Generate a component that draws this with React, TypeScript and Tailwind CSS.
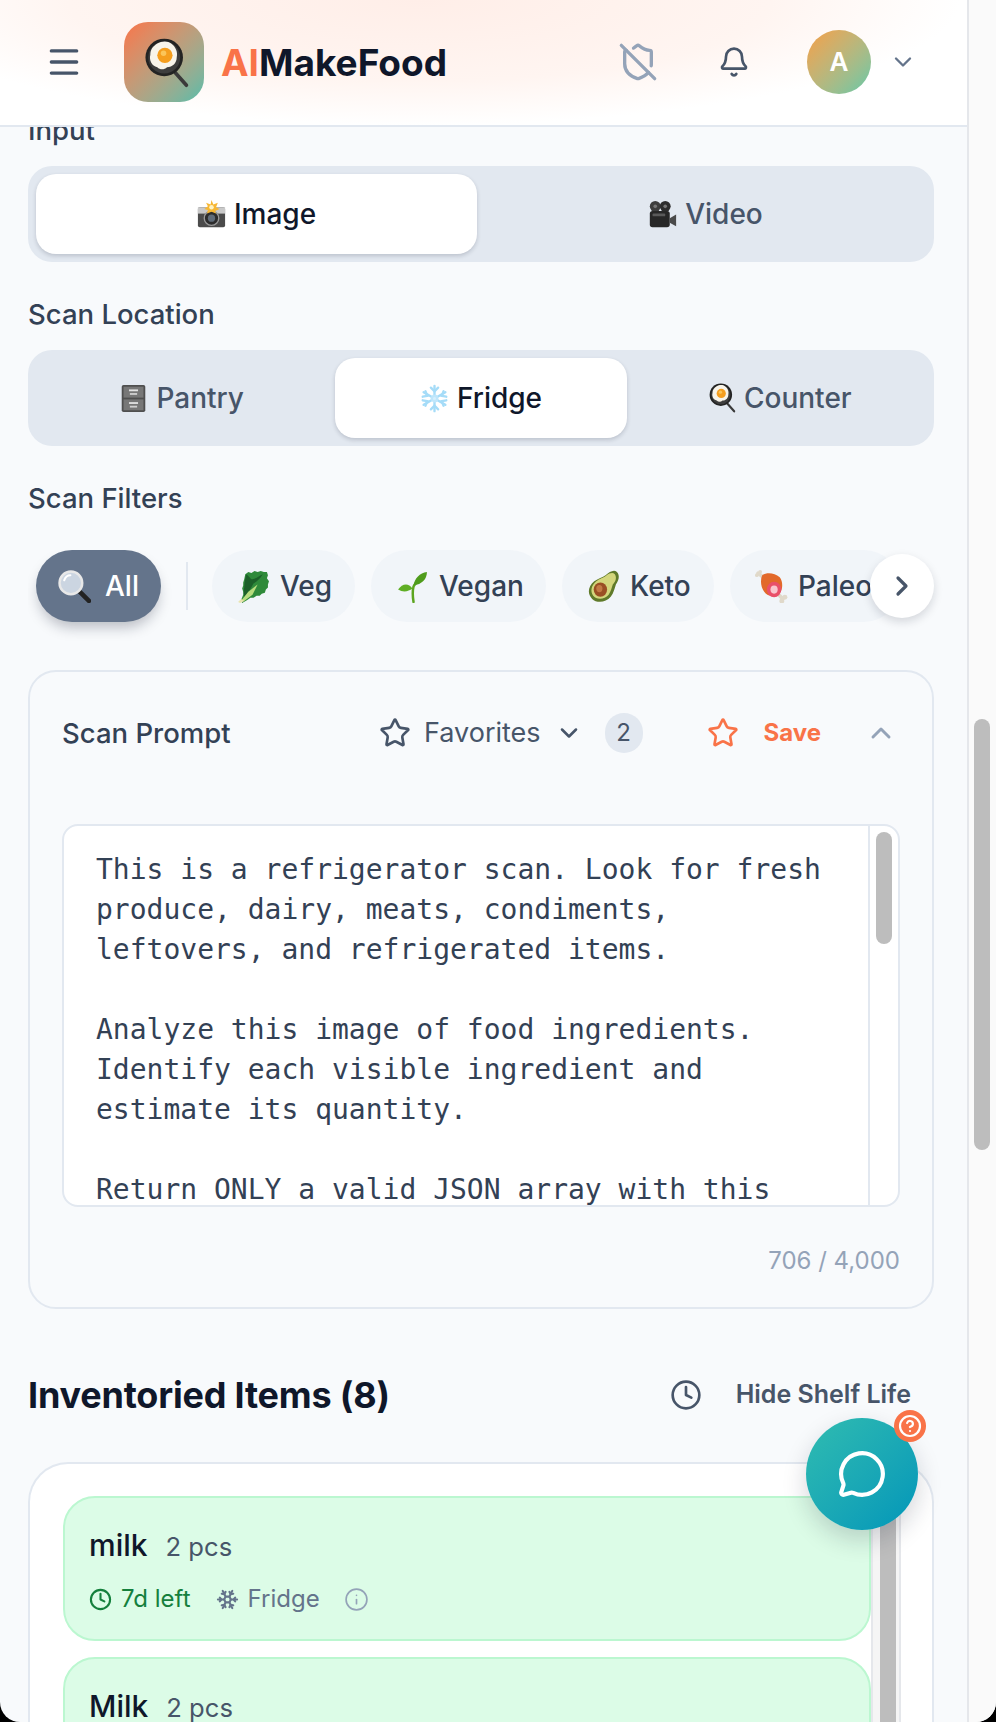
import React from "react";
import {
  Bell,
  ChevronDown,
  ChevronRight,
  ChevronUp,
  CircleHelp,
  Clock,
  Info,
  Menu,
  MessageCircle,
  ShieldOff,
  Snowflake,
  Star,
} from "lucide-react";

const PanEmoji = ({ className }: { className: string }) => (
  <svg viewBox="0 0 32 36" className={className}>
    <path d="M22 25l8 9" stroke="#3a3a3a" strokeWidth="2.6" strokeLinecap="round" />
    <circle cx="14" cy="14" r="13.5" fill="#232323" />
    <circle cx="14" cy="14" r="11.5" fill="#3d3d3d" />
    <path d="M9 4c3-2 8-2 10 0 3 2 5 6 4 10 0 4-3 7-7 7-2 2-5 2-7 0-4-1-6-5-5-9 0-4 2-6 5-8z" fill="#f8f4ea" />
    <circle cx="14.5" cy="12.5" r="5.5" fill="#f59e1e" />
    <circle cx="13.5" cy="11" r="2" fill="#fbc55a" />
  </svg>
);

const CameraEmoji = ({ className }: { className: string }) => (
  <svg viewBox="0 0 32 32" className={className}>
    <rect x="1" y="8" width="30" height="22" rx="2" fill="#4b4b4b" />
    <rect x="1" y="8" width="30" height="7" fill="#c9c9c9" />
    <circle cx="16" cy="20" r="8" fill="#2c2c2c" stroke="#9a9a9a" strokeWidth="1.5" />
    <circle cx="16" cy="20" r="4" fill="#5f6b78" />
    <path d="M16 0l2 5 5-2-2 5 4 2-5 2 1 3-5-2-5 2 1-4-4-1 4-3-2-4 5 2z" fill="#f7b733" />
    <circle cx="16" cy="8" r="2.5" fill="#fff3c2" />
  </svg>
);

const VideoEmoji = ({ className }: { className: string }) => (
  <svg viewBox="0 0 32 32" className={className}>
    <circle cx="8" cy="7" r="6" fill="#3d3d3d" />
    <circle cx="19" cy="7" r="6" fill="#2d2d2d" />
    <circle cx="8" cy="7" r="2" fill="#777" />
    <circle cx="19" cy="7" r="2" fill="#777" />
    <rect x="2" y="12" width="22" height="18" rx="3" fill="#272727" />
    <path d="M24 20l7-4v13l-7-4z" fill="#4a4a4a" />
    <rect x="5" y="15" width="14" height="3" rx="1" fill="#5a5a5a" />
  </svg>
);

const CabinetEmoji = ({ className }: { className: string }) => (
  <svg viewBox="0 0 32 32" className={className}>
    <rect x="3" y="1" width="26" height="30" rx="2" fill="#4f4f4f" />
    <rect x="5" y="3" width="22" height="12" fill="#777" />
    <rect x="5" y="17" width="22" height="12" fill="#777" />
    <rect x="11" y="6" width="10" height="2" fill="#e2e2e2" />
    <rect x="11" y="20" width="10" height="2" fill="#e2e2e2" />
    <rect x="12" y="10" width="8" height="2" fill="#d0d0d0" />
    <rect x="12" y="24" width="8" height="2" fill="#d0d0d0" />
  </svg>
);

const SnowEmoji = ({ className }: { className: string }) => (
  <svg viewBox="0 0 32 32" className={className} stroke="#a5dcf8" strokeWidth="2.6" strokeLinecap="round" fill="none">
    <path d="M16 2v28M4 9l24 14M28 9L4 23" />
    <path d="M12 4l4 4 4-4M12 28l4-4 4 4M3 14l5-1-2-5M29 18l-5 1 2 5M29 14l-5-1 2-5M3 18l5 1-2 5" />
    <circle cx="16" cy="16" r="3" fill="#d4effd" stroke="#bfe6fb" />
  </svg>
);

const LensEmoji = ({ className }: { className: string }) => (
  <svg viewBox="0 0 32 32" className={className}>
    <path d="M20 20l10 10" stroke="#222" strokeWidth="4.5" strokeLinecap="round" />
    <circle cx="12.5" cy="12.5" r="11" fill="#cbd5e1" stroke="#e8e8e8" strokeWidth="2.4" />
    <path d="M6 10c1-3 3-5 6-5" stroke="#fff" strokeWidth="2" fill="none" strokeLinecap="round" />
  </svg>
);

const LettuceEmoji = ({ className }: { className: string }) => (
  <svg viewBox="0 0 32 32" className={className}>
    <path d="M8 4l3-2 3 1 3-2 3 1 3-1 3 1 3 0 1 3-1 3 2 3-1 3 0 3-2 2-1 3-3 1-2 2-3 0-3 2-3 0-3 2-5 3-1-3 2-5 0-3-1-3 1-3 0-3 1-3z" fill="#2f8a3a" />
    <path d="M9 4c3 2 4 5 6 5 4-1 6-3 10-5-3 5-6 7-9 9l-4 7-5 7c0-3-1-7 0-10 0-4 1-9 2-13z" fill="#1c6029" />
    <path d="M3 31l8-10 9-7-5 10-8 6z" fill="#b7dc7d" />
    <path d="M1 31l3-3 3 2-4 2z" fill="#e9e4b0" />
  </svg>
);

const SproutEmoji = ({ className }: { className: string }) => (
  <svg viewBox="0 0 32 32" className={className}>
    <path d="M17 31c-1-6-1-11 0-15 1-2 2-3 3-4" stroke="#5ca51f" strokeWidth="2.4" fill="none" strokeLinecap="round" />
    <path d="M17 15c1-7 6-12 13-13 0 7-5 12-13 13z" fill="#4f9c1c" />
    <path d="M16 18C12 12 6 13 2 19c5 3 10 2 14-1z" fill="#5fae24" />
  </svg>
);

const AvocadoEmoji = ({ className }: { className: string }) => (
  <svg viewBox="0 0 32 32" className={className}>
    <path d="M29 2c3 3 2 8-1 12-1 3-2 8-5 12-5 6-14 6-18 2-5-5-4-12 2-17 4-3 8-4 11-6 4-3 8-6 11-3z" fill="#5f7a2a" />
    <path d="M27 4c2 3 1 7-2 10-1 3-2 7-4 10-4 5-12 5-15 1-3-4-2-10 3-14 3-3 7-3 10-6 3-2 6-3 8-1z" fill="#d3d67c" />
    <ellipse cx="13" cy="19" rx="6.5" ry="7" fill="#9a4f24" />
    <ellipse cx="12" cy="18" rx="3" ry="3.5" fill="#c27a45" />
  </svg>
);

const MeatEmoji = ({ className }: { className: string }) => (
  <svg viewBox="0 0 32 32" className={className}>
    <path d="M8 7L3 3" stroke="#e0d9ca" strokeWidth="3.6" strokeLinecap="round" />
    <path d="M23 24l4 4" stroke="#e0d9ca" strokeWidth="3.6" strokeLinecap="round" />
    <circle cx="29" cy="26.5" r="2.4" fill="#e0d9ca" />
    <circle cx="26" cy="30" r="2.4" fill="#e0d9ca" />
    <circle cx="5" cy="1.8" r="1.8" fill="#e0d9ca" />
    <circle cx="1.8" cy="5" r="1.8" fill="#e0d9ca" />
    <path d="M7 5c5-3 12-2 17 2 3 4 3 10 1 14-4 4-10 5-13 3-5-3-8-12-5-19z" fill="#e2692a" />
    <ellipse cx="18.5" cy="19" rx="7" ry="7.5" fill="#e9506a" />
    <ellipse cx="18.5" cy="19" rx="3.5" ry="4" fill="#f9c6cf" />
  </svg>
);

const filters = [
  { label: "Veg", Icon: LettuceEmoji, width: "w-[143px]" },
  { label: "Vegan", Icon: SproutEmoji, width: "w-[175px]" },
  { label: "Keto", Icon: AvocadoEmoji, width: "w-[152px]" },
  { label: "Paleo", Icon: MeatEmoji, width: "w-[170px]" },
];

const promptText = `This is a refrigerator scan. Look for fresh
produce, dairy, meats, condiments,
leftovers, and refrigerated items.

Analyze this image of food ingredients.
Identify each visible ingredient and
estimate its quantity.

Return ONLY a valid JSON array with this`;

const ItemCard = ({ name }: { name: string }) => (
  <div className="h-[145px] shrink-0 rounded-[32px] border-2 border-[#bbf7d0] bg-[#dcfce7] pl-6 pt-[27px]">
    <div className="flex items-baseline gap-[18px]">
      <span className="text-[30px] leading-[40px] font-medium text-[#0f172a]">{name}</span>
      <span className="text-[25.6px] leading-[40px] text-[#475569]">2 pcs</span>
    </div>
    <div className="mt-[12px] flex h-[40px] items-center text-[24px] leading-[32px]">
      <Clock className="h-[23px] w-[23px] text-[#15803d]" strokeWidth={2.2} />
      <span className="ml-[9px] text-[#15803d]">7d left</span>
      <Snowflake className="ml-[25px] h-[23px] w-[23px] text-[#64748b]" strokeWidth={2.2} />
      <span className="ml-[9px] text-[#64748b]">Fridge</span>
      <Info className="ml-[24px] h-[25px] w-[25px] text-[#94a3b8]" strokeWidth={1.6} />
    </div>
  </div>
);

export default function App() {
  return (
    <div className="relative h-[1722px] w-[996px] overflow-hidden bg-black font-['Inter',sans-serif]">
      <div className="flex h-full w-full overflow-hidden rounded-b-[20px] bg-[#f8fafc]">
        <div className="flex h-full w-[967px] flex-col overflow-hidden">
          <header className="relative z-10 flex h-[127px] shrink-0 items-center border-b-2 border-[#e2e8f0] bg-[radial-gradient(ellipse_540px_125px_at_420px_0px,#ffeee8_0%,#fff5f1_65%,#ffffff_100%)] pb-[2px] pl-[45px]">
            <Menu className="h-[38px] w-[38px] text-[#475569]" strokeWidth={2.1} />
            <div className="ml-[41px] flex h-[80px] w-[80px] items-center justify-center rounded-[24px] bg-gradient-to-br from-[#f97348] to-[#4fbcaa]">
              <PanEmoji className="ml-[6px] mt-[2px] h-[50px] w-[46px]" />
            </div>
            <div className="ml-[17px] mt-[3px] text-[37px] leading-[40px] font-bold">
              <span className="text-[#f97348]">AI</span>
              <span className="text-[#0f172a]">MakeFood</span>
            </div>
            <ShieldOff className="ml-[171px] h-[40px] w-[40px] text-[#94a3b8]" strokeWidth={2} />
            <Bell className="ml-[60px] h-[32px] w-[32px] text-[#475569]" strokeWidth={2} />
            <div className="ml-[57px] flex h-[64px] w-[64px] items-center justify-center rounded-full bg-gradient-to-br from-[#f59e42] to-[#5cc8a8] text-[26px] font-semibold text-white">
              A
            </div>
            <ChevronDown className="ml-[18px] h-[28px] w-[28px] text-[#64748b]" strokeWidth={2} />
          </header>

          <main className="flex-1 overflow-hidden pl-[28px] pr-[33px]">
            <div className="-mt-[15px]">
              <p className="mb-[18px] text-[27.5px] leading-[36px] font-medium text-[#334155]">Input</p>
              <div className="grid grid-cols-2 gap-2 rounded-[24px] bg-[#e2e8f0] p-2">
                <div className="flex h-[80px] items-center justify-center gap-[8px] rounded-[20px] bg-white text-[28px] font-medium text-[#0f172a] shadow-[0_2px_4px_rgba(15,23,42,0.18)]">
                  <CameraEmoji className="h-[29px] w-[29px]" />
                  Image
                </div>
                <div className="flex h-[80px] items-center justify-center gap-[8px] rounded-[20px] text-[28px] font-medium text-[#475569]">
                  <VideoEmoji className="h-[29px] w-[29px]" />
                  Video
                </div>
              </div>

              <p className="mb-[18px] mt-[34px] text-[27.5px] leading-[36px] font-medium text-[#334155]">Scan Location</p>
              <div className="grid grid-cols-3 gap-2 rounded-[24px] bg-[#e2e8f0] p-2">
                <div className="flex h-[80px] items-center justify-center gap-[8px] rounded-[20px] text-[28px] font-medium text-[#475569]">
                  <CabinetEmoji className="h-[29px] w-[29px]" />
                  Pantry
                </div>
                <div className="flex h-[80px] items-center justify-center gap-[8px] rounded-[20px] bg-white text-[28px] font-medium text-[#0f172a] shadow-[0_2px_4px_rgba(15,23,42,0.18)]">
                  <SnowEmoji className="h-[29px] w-[29px]" />
                  Fridge
                </div>
                <div className="flex h-[80px] items-center justify-center gap-[8px] rounded-[20px] text-[28px] font-medium text-[#475569]">
                  <PanEmoji className="h-[30px] w-[27px]" />
                  Counter
                </div>
              </div>

              <p className="mb-[34px] mt-[34px] text-[27.5px] leading-[36px] font-medium text-[#334155]">Scan Filters</p>
              <div className="relative h-[72px]">
                <div className="-mb-[28px] flex h-[100px] items-start overflow-hidden pl-2">
                  <div className="flex h-[72px] w-[125px] shrink-0 items-center justify-center gap-[14px] rounded-full bg-[#64748b] text-[28px] font-medium text-white shadow-[0_8px_14px_-3px_rgba(15,23,42,0.28)]">
                    <LensEmoji className="h-[33px] w-[33px]" />
                    All
                  </div>
                  <div className="ml-[25px] mt-[12px] h-[48px] w-[2px] shrink-0 bg-[#e2e8f0]" />
                  <div className="ml-[24px] flex gap-4">
                    {filters.map(({ label, Icon, width }) => (
                      <div
                        key={label}
                        className={`flex h-[72px] ${width} shrink-0 items-center gap-[10px] rounded-full bg-[#f1f5f9] pl-[25px] text-[28px] font-medium text-[#334155]`}
                      >
                        <Icon className="h-[33px] w-[33px]" />
                        {label}
                      </div>
                    ))}
                  </div>
                </div>
                <div className="absolute right-0 top-[4px] flex h-[64px] w-[64px] items-center justify-center rounded-full bg-white shadow-[0_4px_10px_rgba(15,23,42,0.15)]">
                  <ChevronRight className="h-[32px] w-[32px] text-[#475569]" strokeWidth={2.4} />
                </div>
              </div>

              <section className="mt-[48px] h-[639px] rounded-[28px] border-2 border-[#e2e8f0] px-[32px]">
                <div className="mb-[30px] flex h-[122px] items-center text-[27px] leading-[36px]">
                  <span className="w-[317px] text-[27.5px] font-medium text-[#334155]">Scan Prompt</span>
                  <Star className="h-[32px] w-[32px] text-[#475569]" strokeWidth={2} />
                  <span className="ml-[13px] text-[#475569]">Favorites</span>
                  <ChevronDown className="ml-[14px] h-[28px] w-[28px] text-[#475569]" strokeWidth={2.2} />
                  <span className="ml-[22px] flex h-[40px] w-[38px] items-center justify-center rounded-full bg-[#e2e8f0] text-[24px] text-[#475569]">2</span>
                  <Star className="ml-[64px] h-[32px] w-[32px] text-[#f97348]" strokeWidth={2} />
                  <span className="ml-[25px] text-[24px] font-bold text-[#f97348]">Save</span>
                  <ChevronUp className="ml-[44px] h-[32px] w-[32px] text-[#94a3b8]" strokeWidth={2.2} />
                </div>
                <div className="flex h-[383px] overflow-hidden rounded-[16px] border-2 border-[#e2e8f0] bg-white">
                  <pre className="flex-1 pl-[32px] pt-[24px] font-['DejaVu_Sans_Mono',monospace] text-[28px] leading-[40px] text-[#334155]">
                    {promptText}
                  </pre>
                  <div className="w-[30px] shrink-0 border-l-2 border-[#e2e8f0] pl-[6px] pt-[6px]">
                    <div className="h-[112px] w-[16px] rounded-full bg-[#bdbdbd]" />
                  </div>
                </div>
                <p className="mt-[38px] text-right text-[24px] leading-[32px] text-[#94a3b8]">706 / 4,000</p>
              </section>

              <div className="mt-[62px] flex h-[48px] items-center justify-between pr-[23px]">
                <h2 className="text-[36px] leading-[48px] font-bold tracking-[-0.2px] text-[#0f172a]">Inventoried Items (8)</h2>
                <div className="flex items-center gap-[34px] text-[25px] font-semibold text-[#475569]">
                  <Clock className="h-[32px] w-[32px]" strokeWidth={2} />
                  Hide Shelf Life
                </div>
              </div>

              <section className="mt-[43px] flex h-[300px] rounded-t-[40px] border-2 border-b-0 border-[#e2e8f0] bg-white pl-[33px] pt-[32px]">
                <div className="flex w-[808px] flex-col gap-4">
                  <ItemCard name="milk" />
                  <ItemCard name="Milk" />
                </div>
                <div className="h-full w-[30px] border-x-2 border-[#e5e7eb] bg-[#f5f5f5] pl-[7px]">
                  <div className="h-full w-[16px] bg-[#bdbdbd]" />
                </div>
              </section>
            </div>
          </main>
        </div>

        <aside className="h-full w-[29px] border-l-2 border-[#e5e7eb] bg-[#fafafa] pl-[5px] pt-[719px]">
          <div className="h-[431px] w-[16px] rounded-full bg-[#bdbdbd]" />
        </aside>
      </div>

      <button className="absolute left-[806px] top-[1418px] flex h-[112px] w-[112px] items-center justify-center rounded-full bg-gradient-to-br from-[#2fbcb0] to-[#0096b9] shadow-[0_10px_24px_rgba(15,23,42,0.18)]">
        <MessageCircle className="h-[50px] w-[50px] text-white" strokeWidth={2} />
        <span className="absolute -right-[8px] -top-[8px] flex h-[32px] w-[32px] items-center justify-center rounded-full bg-[#f97348]">
          <CircleHelp className="h-[24px] w-[24px] text-white" strokeWidth={2.2} />
        </span>
      </button>
    </div>
  );
}
